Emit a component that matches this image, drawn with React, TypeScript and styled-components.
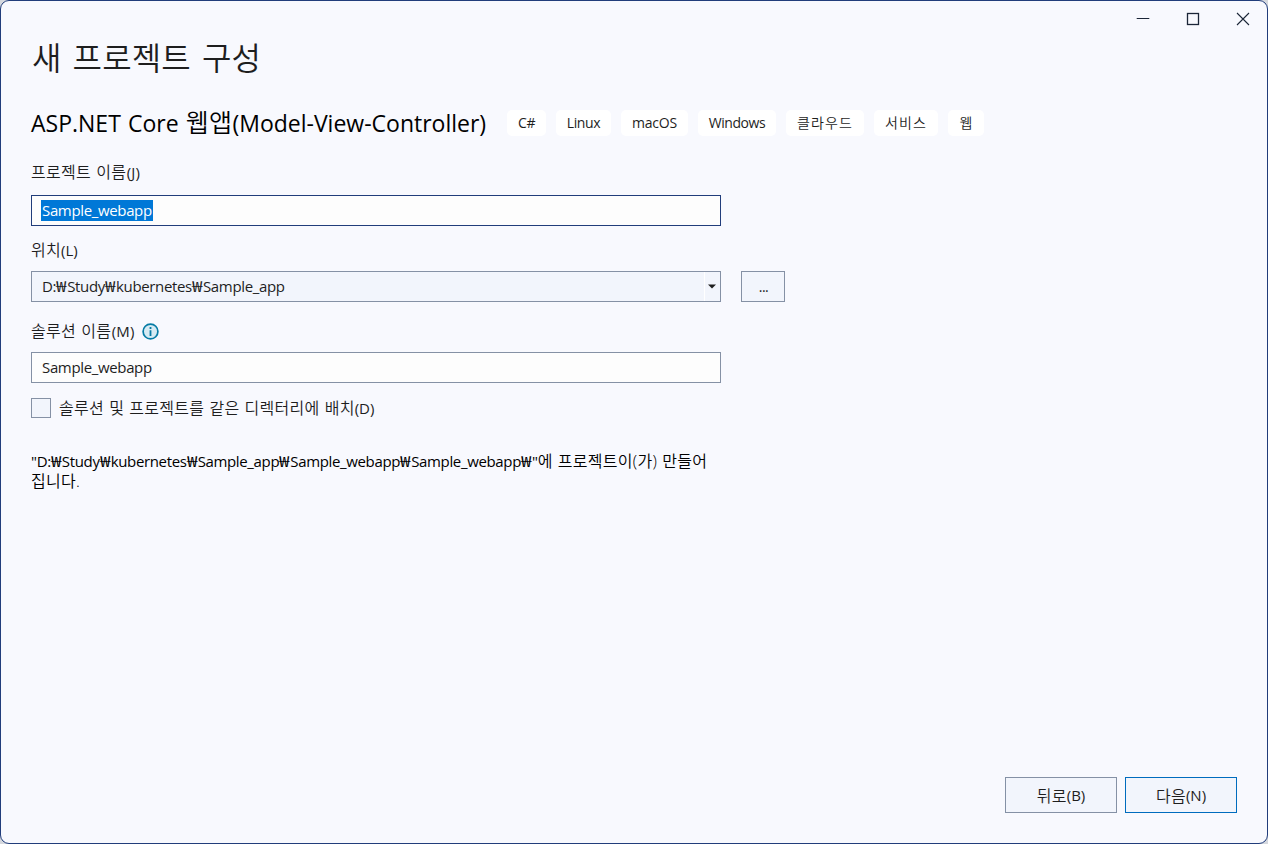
import React from "react";
import styled, { createGlobalStyle } from "styled-components";

const GlobalStyle = createGlobalStyle`
  * { box-sizing: border-box; }
  html, body { margin: 0; padding: 0; background: #d5d8de; }
  body {
    font-family: "Open Sans", "Noto Sans CJK KR", sans-serif;
    font-size: 15px;
    font-weight: 400;
    color: #1e1e1e;
    overflow: hidden;
  }
`;

const Dialog = styled.div`
  display: flex;
  flex-direction: column;
  width: 1268px;
  height: 844px;
  border: 1px solid #213d7b;
  border-radius: 9px;
  background: #f8f9fe;
  overflow: hidden;
`;

const TitleBar = styled.div`
  display: flex;
  justify-content: flex-end;
  height: 36px;
  margin-right: -1px;
  flex: none;
`;

const WindowButton = styled.button`
  display: flex;
  align-items: center;
  justify-content: center;
  width: 50px;
  height: 36px;
  padding: 0;
  border: 0;
  background: transparent;
  color: #1b2638;
`;

const Content = styled.main`
  display: flex;
  flex-direction: column;
  flex: 1;
  padding: 0 30px;
`;

const Title = styled.h1`
  margin: 0 0 0 1px;
  height: 40px;
  line-height: 42px;
  font-size: 32px;
  font-weight: 350;
  letter-spacing: 0.15px;
  word-spacing: 2.5px;
  white-space: nowrap;
`;

const TemplateRow = styled.div`
  display: flex;
  align-items: center;
  height: 26px;
  margin-top: 33px;
`;

const TemplateName = styled.h2`
  margin: 0;
  width: 476px;
  line-height: 26px;
  font-size: 23px;
  font-weight: 400;
  word-spacing: 1.2px;
  color: #000;
  white-space: nowrap;
`;

const TemplateHangul = styled.span`
  font-size: 25px;
  font-weight: 350;
  letter-spacing: 0.3px;
  line-height: 20px;
`;

const Tags = styled.div`
  display: flex;
  gap: 10px;
`;

const Tag = styled.span<{ $width: number }>`
  display: flex;
  align-items: center;
  justify-content: center;
  width: ${(p) => p.$width}px;
  height: 26px;
  padding-bottom: 2px;
  border-radius: 5px;
  background: #fff;
  font-size: 14px;
  white-space: nowrap;
`;

const Run = styled.span<{ $track?: number; $weight?: number }>`
  letter-spacing: ${(p) => p.$track ?? 0}px;
  font-weight: ${(p) => p.$weight ?? 400};
`;

const Hangul = styled.span`
  font-size: 16px;
  font-weight: 350;
  letter-spacing: 0.28px;
  word-spacing: 0.7px;
`;

const WonSign = styled.span`
  display: inline-block;
  width: 11.1px;
  letter-spacing: 0;
  transform: scaleX(1.25);
  transform-origin: left;
`;

const Label = styled.label<{ $top: number }>`
  display: flex;
  align-items: center;
  height: 20px;
  margin-top: ${(p) => p.$top}px;
  line-height: 20px;
  white-space: pre;
`;

const AccessKey = styled.span`
  margin-left: 0.5px;
  letter-spacing: 0.2px;
`;

const FieldRow = styled.div<{ $top: number }>`
  display: flex;
  gap: 20px;
  margin-top: ${(p) => p.$top}px;
`;

const Field = styled.div<{ $focused?: boolean; $combo?: boolean }>`
  display: flex;
  align-items: center;
  width: 690px;
  height: 31px;
  padding-left: ${(p) => (p.$focused ? 9 : 10)}px;
  border: 1px solid ${(p) => (p.$focused ? "#213d7b" : "#8591a5")};
  background: ${(p) => (p.$combo ? "#f2f5fc" : "#fdfdfd")};
  line-height: 18px;
  white-space: nowrap;
`;

const FieldText = styled.span`
  height: 20px;
`;

const Selected = styled.span`
  height: 21px;
  line-height: 20px;
  padding: 0 1px;
  background: #0078d7;
  color: #fff;
`;

const DropButton = styled.span`
  display: flex;
  align-items: center;
  justify-content: center;
  width: 16px;
  height: 29px;
  padding-right: 2px;
  margin-left: auto;
  border-left: 1px solid #fff;
`;

const Button = styled.button<{ $width: number; $height: number; $primary?: boolean }>`
  display: flex;
  align-items: center;
  justify-content: center;
  width: ${(p) => p.$width}px;
  height: ${(p) => p.$height}px;
  padding: 0 0 1px;
  border: 1px solid ${(p) => (p.$primary ? "#006cbe" : "#8591a5")};
  background: #f2f5fc;
  color: #1e1e1e;
  font: inherit;
`;

const Ellipsis = styled.span`
  padding-left: 1px;
  font-size: 14px;
  letter-spacing: -0.5px;
`;

const CheckRow = styled.label`
  display: flex;
  align-items: center;
  gap: 8px;
  height: 20px;
  margin-top: 15px;
  line-height: 22px;
  white-space: nowrap;
`;

const CheckBox = styled.span`
  width: 20px;
  height: 20px;
  border: 1px solid #8591a5;
  background: #f2f5fc;
`;

const PathNote = styled.p`
  margin: 33px 0 0;
  line-height: 20px;
  color: #000;
  white-space: nowrap;
`;

const Footer = styled.footer`
  display: flex;
  justify-content: flex-end;
  gap: 8px;
  margin-top: auto;
  padding-bottom: 30px;
`;

const InfoIcon = styled.svg`
  margin-left: 7px;
`;

const tags = [
  { text: "C#", width: 39, track: -0.4 },
  { text: "Linux", width: 55, track: -0.4 },
  { text: "macOS", width: 67, track: -0.2 },
  { text: "Windows", width: 78, track: -0.45 },
  { text: "클라우드", width: 78, track: 1.1, weight: 350 },
  { text: "서비스", width: 64, track: 1.1, weight: 350 },
  { text: "웹", width: 36, track: 0, weight: 350 },
];

function Path({ children }: { children: string }) {
  return (
    <Run $track={-0.35}>
      {children.split("₩").map((part, i) => (
        <React.Fragment key={i}>
          {i > 0 && <WonSign>₩</WonSign>}
          {part}
        </React.Fragment>
      ))}
    </Run>
  );
}

export default function App() {
  return (
    <>
      <GlobalStyle />
      <Dialog>
        <TitleBar>
          <WindowButton aria-label="최소화">
            <svg width="14" height="14" viewBox="0 0 14 14">
              <path d="M0.7 6.5H13.3" stroke="currentColor" strokeWidth="1.2" />
            </svg>
          </WindowButton>
          <WindowButton aria-label="최대화">
            <svg width="14" height="14" viewBox="0 0 14 14">
              <rect x="1.5" y="1.5" width="11" height="11" fill="none" stroke="currentColor" strokeWidth="1.3" />
            </svg>
          </WindowButton>
          <WindowButton aria-label="닫기">
            <svg width="14" height="14" viewBox="0 0 14 14">
              <path d="M1 1L13 13M13 1L1 13" stroke="currentColor" strokeWidth="1.1" />
            </svg>
          </WindowButton>
        </TitleBar>
        <Content>
          <Title>새 프로젝트 구성</Title>
          <TemplateRow>
            <TemplateName>
              <Run>ASP.NET Core </Run>
              <TemplateHangul>웹앱</TemplateHangul>
              <Run>(Model-View-Controller)</Run>
            </TemplateName>
            <Tags>
              {tags.map((t) => (
                <Tag key={t.text} $width={t.width}>
                  <Run $track={t.track} $weight={t.weight}>{t.text}</Run>
                </Tag>
              ))}
            </Tags>
          </TemplateRow>
          <Label $top={26}>
            <Hangul>프로젝트 이름</Hangul><AccessKey>(J)</AccessKey>
          </Label>
          <FieldRow $top={13}>
            <Field $focused>
              <Selected><Run $track={-0.35}>Sample_webapp</Run></Selected>
            </Field>
          </FieldRow>
          <Label $top={14}>
            <Hangul>위치</Hangul><Run>(L)</Run>
          </Label>
          <FieldRow $top={11}>
            <Field $combo>
              <FieldText><Path>D:₩Study₩kubernetes₩Sample_app</Path></FieldText>
              <DropButton>
                <svg width="8" height="5" viewBox="0 0 8 5">
                  <path d="M0 0.5H8L4 4.5Z" fill="#1e1e1e" />
                </svg>
              </DropButton>
            </Field>
            <Button $width={44} $height={31}><Ellipsis>...</Ellipsis></Button>
          </FieldRow>
          <Label $top={19}>
            <Hangul>솔루션 이름</Hangul><AccessKey>(M)</AccessKey>
            <InfoIcon width="17" height="17" viewBox="0 0 17 17">
              <circle cx="8.5" cy="8.5" r="7.4" fill="#d7ebf3" stroke="#077ca5" strokeWidth="1.7" />
              <path d="M8.5 4V6M8.5 7.2V13" stroke="#077ca5" strokeWidth="1.8" />
            </InfoIcon>
          </Label>
          <FieldRow $top={11}>
            <Field><FieldText><Run $track={-0.35}>Sample_webapp</Run></FieldText></Field>
          </FieldRow>
          <CheckRow>
            <CheckBox />
            <span>
              <Hangul>솔루션 및 프로젝트를 같은 디렉터리에 배치</Hangul><Run>(D)</Run>
            </span>
          </CheckRow>
          <PathNote>
            <Path>"D:₩Study₩kubernetes₩Sample_app₩Sample_webapp₩Sample_webapp₩"</Path>
            <Hangul>에 프로젝트이(가) 만들어</Hangul>
            <br />
            <Hangul>집니다.</Hangul>
          </PathNote>
          <Footer>
            <Button $width={112} $height={36}>
              <Hangul>뒤로</Hangul><Run>(B)</Run>
            </Button>
            <Button $width={112} $height={36} $primary>
              <Hangul>다음</Hangul><Run>(N)</Run>
            </Button>
          </Footer>
        </Content>
      </Dialog>
    </>
  );
}
